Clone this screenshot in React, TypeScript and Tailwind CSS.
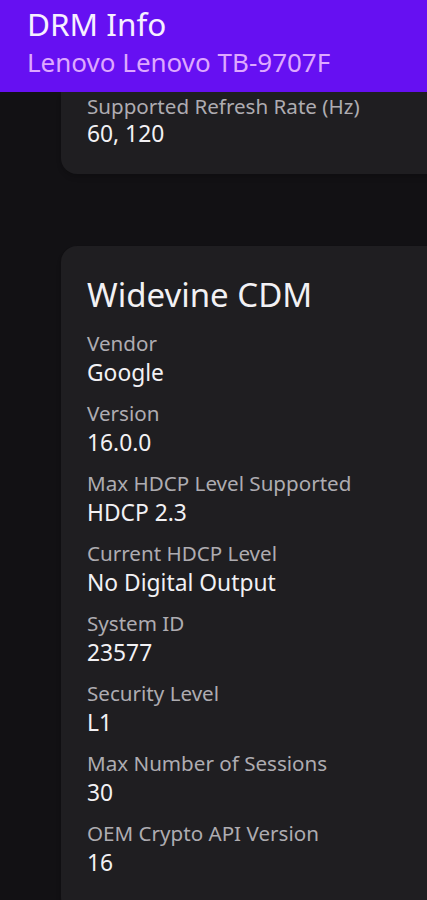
import React from "react";

type Row = { label: string; value: string };

const widevine: Row[] = [
  { label: "Vendor", value: "Google" },
  { label: "Version", value: "16.0.0" },
  { label: "Max HDCP Level Supported", value: "HDCP 2.3" },
  { label: "Current HDCP Level", value: "No Digital Output" },
  { label: "System ID", value: "23577" },
  { label: "Security Level", value: "L1" },
  { label: "Max Number of Sessions", value: "30" },
  { label: "OEM Crypto API Version", value: "16" },
];

function Item({ label, value }: Row) {
  return (
    <div className="mb-[12px]">
      <p className="text-[20.6px] leading-[28px] text-[#aeacb1]">{label}</p>
      <p className="pt-[2px] text-[22.8px] leading-[28px] text-[#f2f1f4]">{value}</p>
    </div>
  );
}

export default function App() {
  return (
    <div
      className="h-[900px] overflow-hidden bg-[#121114]"
      style={{ fontFamily: '"Noto Sans", "Open Sans", sans-serif' }}
    >
      <header className="h-[92px] bg-[#6610f2] px-[27px] pt-[4px]">
        <h1 className="text-[31.5px] leading-[40px] text-[#f6efff]">DRM Info</h1>
        <p className="mt-[1px] text-[26px] leading-[34px] text-[#dea8ff]">Lenovo Lenovo TB-9707F</p>
      </header>

      <div className="-mr-[30px] ml-[61px] rounded-b-2xl bg-[#1f1e21] pl-[26px] pb-[26px] shadow-md">
        <p className="text-[20.6px] leading-[28px] text-[#aeacb1]">Supported Refresh Rate (Hz)</p>
        <p className="text-[22.8px] leading-[28px] text-[#f2f1f4]">60, 120</p>
      </div>

      <section className="-mr-[30px] mt-[72px] ml-[61px] rounded-2xl bg-[#1f1e21] pl-[26px] pt-[29px] pb-6 shadow-md">
        <h2 className="mb-[14px] text-[33px] leading-[40px] text-[#f2f1f4]">Widevine CDM</h2>
        {widevine.map((r) => (
          <Item key={r.label} {...r} />
        ))}
      </section>
    </div>
  );
}
